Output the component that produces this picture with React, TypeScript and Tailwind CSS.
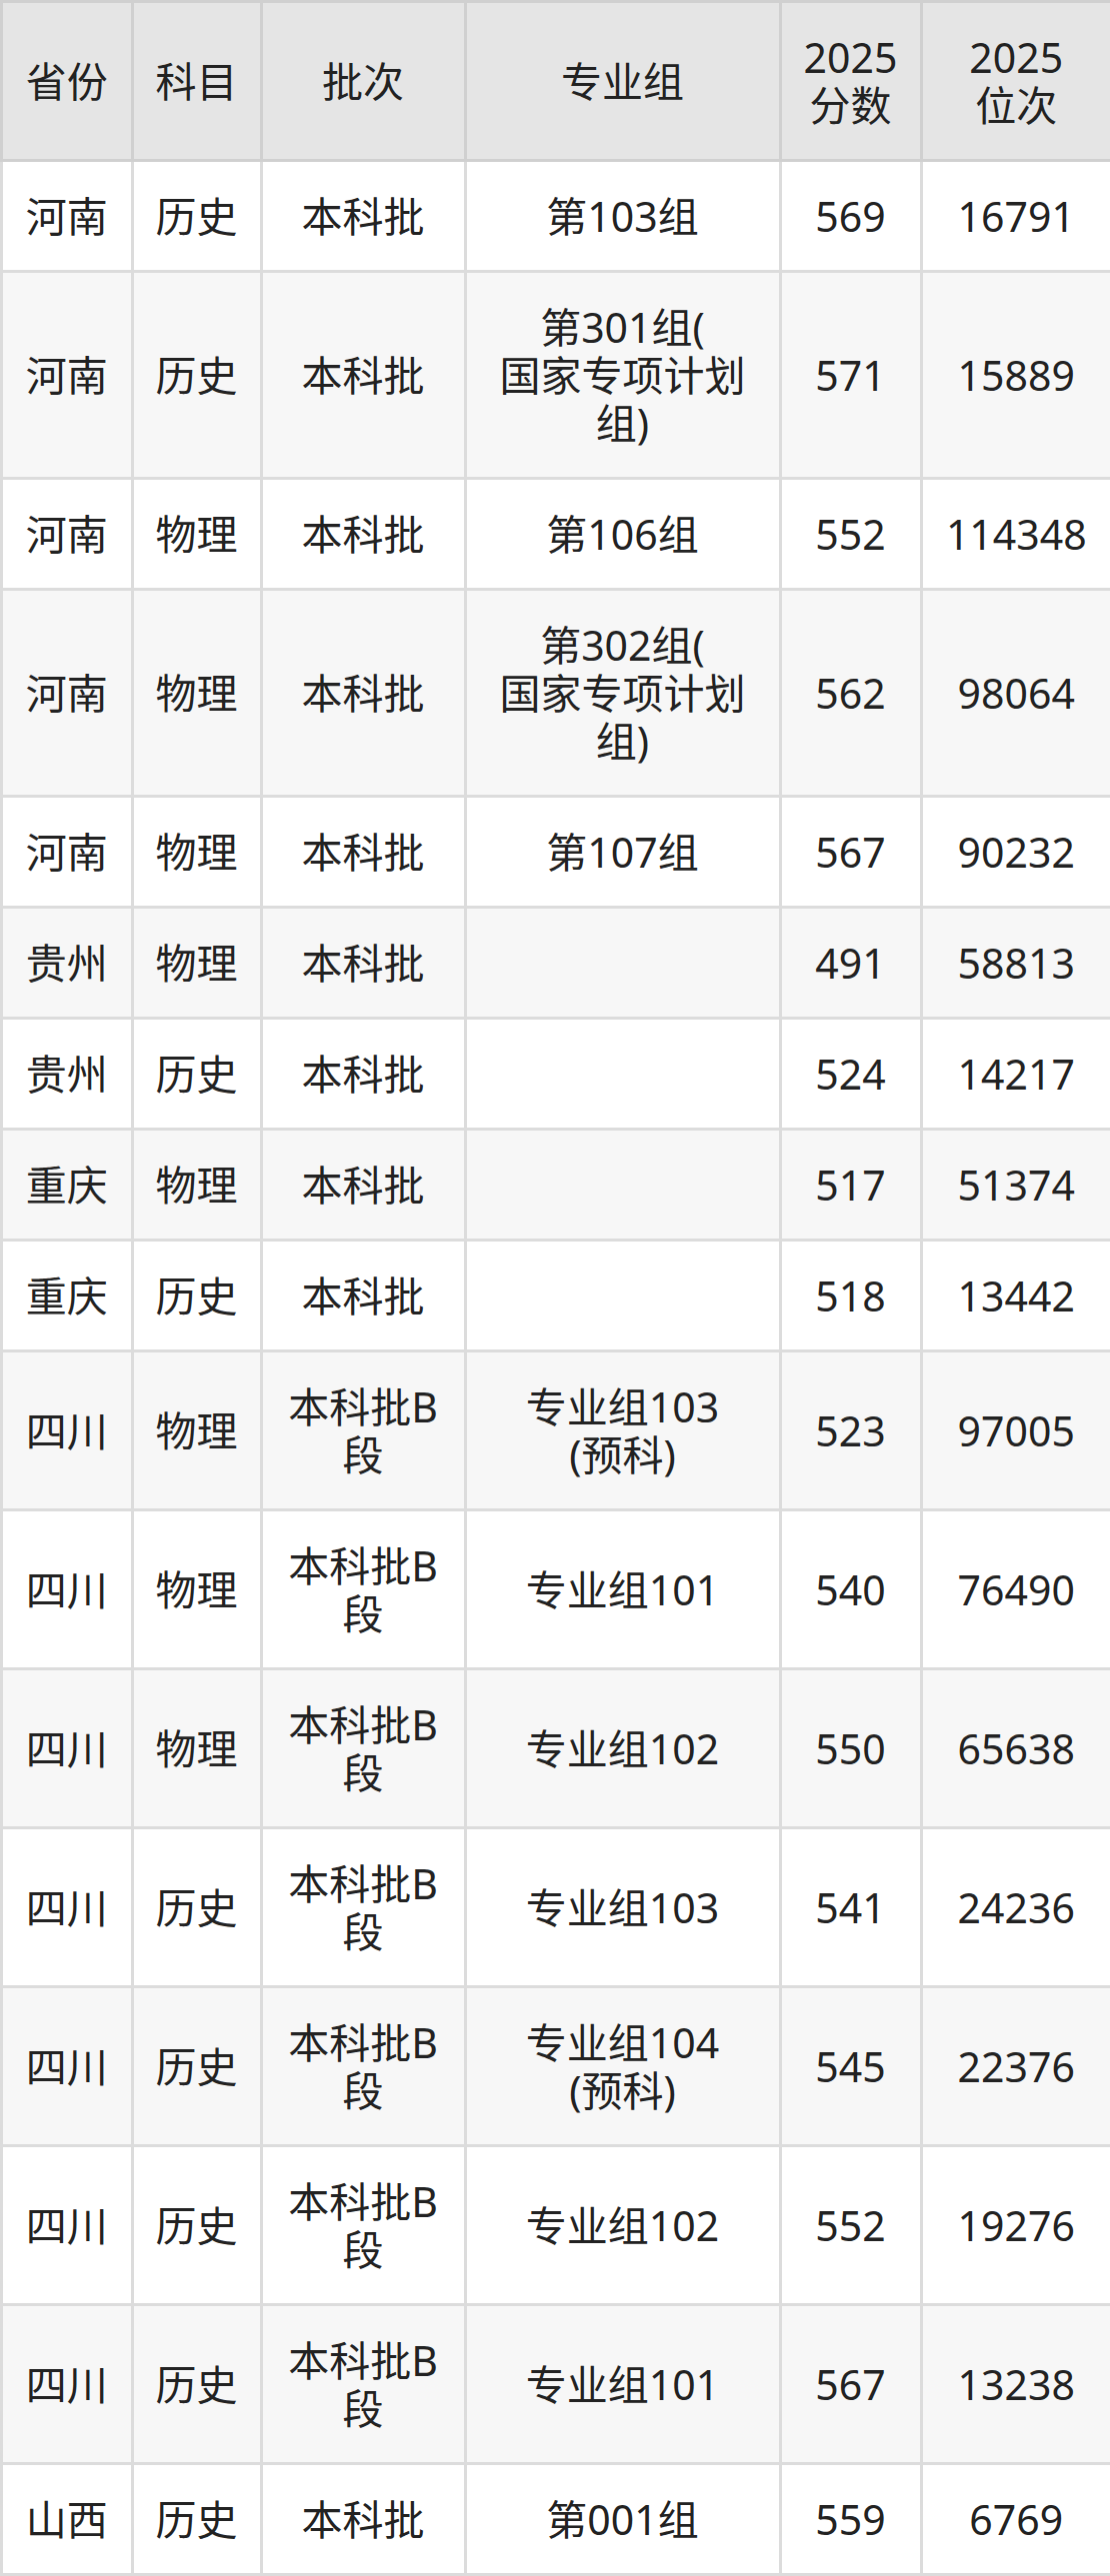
import React from "react";

type Row = [string, string, string, string, string, string];

// "|" marks where the reference wraps a cell onto a new line
const rows: Row[] = [
  ["河南", "历史", "本科批", "第103组", "569", "16791"],
  ["河南", "历史", "本科批", "第301组(|国家专项计划|组)", "571", "15889"],
  ["河南", "物理", "本科批", "第106组", "552", "114348"],
  ["河南", "物理", "本科批", "第302组(|国家专项计划|组)", "562", "98064"],
  ["河南", "物理", "本科批", "第107组", "567", "90232"],
  ["贵州", "物理", "本科批", "", "491", "58813"],
  ["贵州", "历史", "本科批", "", "524", "14217"],
  ["重庆", "物理", "本科批", "", "517", "51374"],
  ["重庆", "历史", "本科批", "", "518", "13442"],
  ["四川", "物理", "本科批B|段", "专业组103|(预科)", "523", "97005"],
  ["四川", "物理", "本科批B|段", "专业组101", "540", "76490"],
  ["四川", "物理", "本科批B|段", "专业组102", "550", "65638"],
  ["四川", "历史", "本科批B|段", "专业组103", "541", "24236"],
  ["四川", "历史", "本科批B|段", "专业组104|(预科)", "545", "22376"],
  ["四川", "历史", "本科批B|段", "专业组102", "552", "19276"],
  ["四川", "历史", "本科批B|段", "专业组101", "567", "13238"],
  ["山西", "历史", "本科批", "第001组", "559", "6769"],
];

const headers = ["省份", "科目", "批次", "专业组", "2025|分数", "2025|位次"];

function Lines({ text }: { text: string }) {
  const parts = text.split("|");
  return (
    <>
      {parts.map((p, i) => (
        <React.Fragment key={i}>
          {i > 0 && <br />}
          <span className="whitespace-nowrap">{p}</span>
        </React.Fragment>
      ))}
    </>
  );
}

export default function App() {
  return (
    <div className="w-[1110px] bg-white font-['Noto_Sans','Noto_Sans_CJK_SC',sans-serif] text-[#222]">
      <table className="w-[1110px] table-fixed border-collapse text-center text-[41px] leading-[48px]">
        <colgroup>
          <col className="w-[130.5px]" />
          <col className="w-[129px]" />
          <col className="w-[204px]" />
          <col className="w-[315px]" />
          <col className="w-[141px]" />
          <col className="w-[190.5px]" />
        </colgroup>
        <thead>
          <tr className="bg-[#e5e5e5]">
            {headers.map((h, i) => (
              <th
                key={i}
                className="border-[3px] border-[#d0d0d0] px-1 py-[30px] font-normal align-middle"
              >
                <Lines text={h} />
              </th>
            ))}
          </tr>
        </thead>
        <tbody>
          {rows.map((r, ri) => (
            <tr key={ri} className={ri % 2 === 1 ? "bg-[#f7f7f7]" : "bg-white"}>
              {r.map((c, ci) => (
                <td
                  key={ci}
                  className="border-[3px] border-[#dcdcdc] px-1 py-[30px] align-middle"
                >
                  <Lines text={c} />
                </td>
              ))}
            </tr>
          ))}
        </tbody>
      </table>
    </div>
  );
}
